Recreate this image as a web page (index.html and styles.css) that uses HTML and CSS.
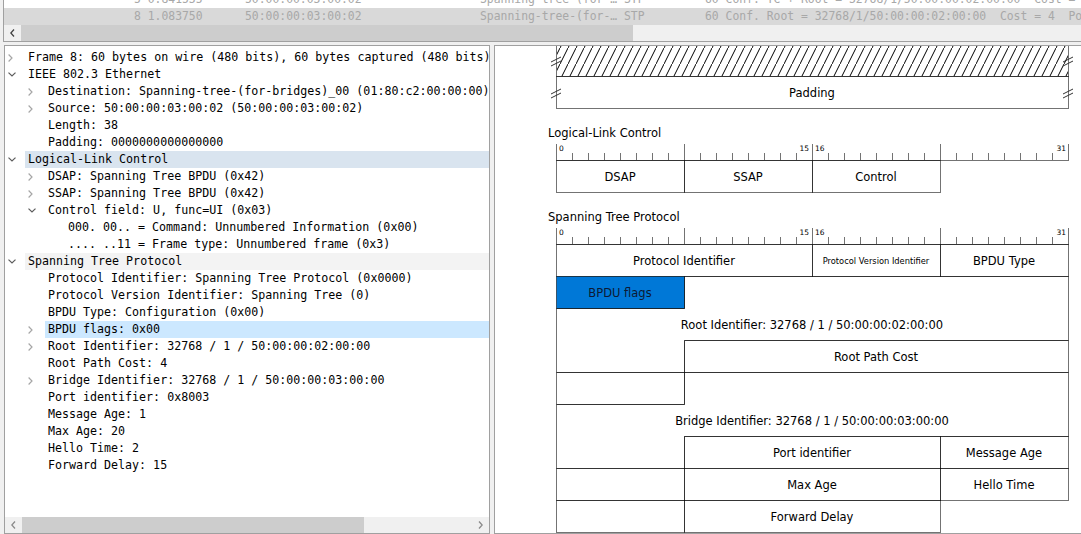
FILE: index.html
```html
<!DOCTYPE html>
<html>
<head>
<meta charset="utf-8">
<link rel="stylesheet" href="styles.css">
</head>
<body>
<div class="plist">
  <div class="plist-rows">
    <div class="prow first"><span class="pc c1">5 0.841535</span><span class="pc c2">50:00:00:03:00:02</span><span class="pc c3">Spanning-tree-(for-… STP</span><span class="pc c4">60 Conf. TC + Root = 32768/1/50:00:00:02:00:00  Cost = 4  Port = 0x8003</span></div>
    <div class="prow sel"><span class="pc c1">8 1.083750</span><span class="pc c2">50:00:00:03:00:02</span><span class="pc c3">Spanning-tree-(for-… STP</span><span class="pc c4">60 Conf. Root = 32768/1/50:00:00:02:00:00  Cost = 4  Port = 0x8003</span></div>
  </div>
  <div class="hscroll">
    <div class="sb-btn"><svg width="5" height="8" viewBox="0 0 5 8"><path d="M4 0.5 L0.8 4 L4 7.5" fill="none" stroke="#404040" stroke-width="1.3"/></svg></div>
    <div class="sb-thumb top-thumb"></div>
    <div class="sb-track"></div>
  </div>
</div>

<div class="panes">
  <div class="tree-pane">
    <div class="tree">
      <div class="trow"><span class="tw"><svg class="chev" width="5" height="8" viewBox="0 0 5 8"><path d="M0.6 0.5 L4 4 L0.6 7.5"/></svg></span><span class="lbl">Frame 8: 60 bytes on wire (480 bits), 60 bytes captured (480 bits)</span></div>
      <div class="trow"><span class="tw"><svg class="chev open" width="8" height="5" viewBox="0 0 8 5"><path d="M0.5 0.6 L4 4 L7.5 0.6"/></svg></span><span class="lbl">IEEE 802.3 Ethernet</span></div>
      <div class="trow l1"><span class="tw"><svg class="chev" width="5" height="8" viewBox="0 0 5 8"><path d="M0.6 0.5 L4 4 L0.6 7.5"/></svg></span><span class="lbl">Destination: Spanning-tree-(for-bridges)_00 (01:80:c2:00:00:00)</span></div>
      <div class="trow l1"><span class="tw"><svg class="chev" width="5" height="8" viewBox="0 0 5 8"><path d="M0.6 0.5 L4 4 L0.6 7.5"/></svg></span><span class="lbl">Source: 50:00:00:03:00:02 (50:00:00:03:00:02)</span></div>
      <div class="trow l1"><span class="tw"></span><span class="lbl">Length: 38</span></div>
      <div class="trow l1"><span class="tw"></span><span class="lbl">Padding: 0000000000000000</span></div>
      <div class="trow parent"><span class="tw"><svg class="chev open" width="8" height="5" viewBox="0 0 8 5"><path d="M0.5 0.6 L4 4 L7.5 0.6"/></svg></span><span class="lbl">Logical-Link Control</span></div>
      <div class="trow l1"><span class="tw"><svg class="chev" width="5" height="8" viewBox="0 0 5 8"><path d="M0.6 0.5 L4 4 L0.6 7.5"/></svg></span><span class="lbl">DSAP: Spanning Tree BPDU (0x42)</span></div>
      <div class="trow l1"><span class="tw"><svg class="chev" width="5" height="8" viewBox="0 0 5 8"><path d="M0.6 0.5 L4 4 L0.6 7.5"/></svg></span><span class="lbl">SSAP: Spanning Tree BPDU (0x42)</span></div>
      <div class="trow l1"><span class="tw"><svg class="chev open" width="8" height="5" viewBox="0 0 8 5"><path d="M0.5 0.6 L4 4 L7.5 0.6"/></svg></span><span class="lbl">Control field: U, func=UI (0x03)</span></div>
      <div class="trow l2"><span class="tw"></span><span class="lbl">000. 00.. = Command: Unnumbered Information (0x00)</span></div>
      <div class="trow l2"><span class="tw"></span><span class="lbl">.... ..11 = Frame type: Unnumbered frame (0x3)</span></div>
      <div class="trow hover"><span class="tw"><svg class="chev open" width="8" height="5" viewBox="0 0 8 5"><path d="M0.5 0.6 L4 4 L7.5 0.6"/></svg></span><span class="lbl">Spanning Tree Protocol</span></div>
      <div class="trow l1"><span class="tw"></span><span class="lbl">Protocol Identifier: Spanning Tree Protocol (0x0000)</span></div>
      <div class="trow l1"><span class="tw"></span><span class="lbl">Protocol Version Identifier: Spanning Tree (0)</span></div>
      <div class="trow l1"><span class="tw"></span><span class="lbl">BPDU Type: Configuration (0x00)</span></div>
      <div class="trow l1 sel"><span class="tw"><svg class="chev" width="5" height="8" viewBox="0 0 5 8"><path d="M0.6 0.5 L4 4 L0.6 7.5"/></svg></span><span class="lbl">BPDU flags: 0x00</span></div>
      <div class="trow l1"><span class="tw"><svg class="chev" width="5" height="8" viewBox="0 0 5 8"><path d="M0.6 0.5 L4 4 L0.6 7.5"/></svg></span><span class="lbl">Root Identifier: 32768 / 1 / 50:00:00:02:00:00</span></div>
      <div class="trow l1"><span class="tw"></span><span class="lbl">Root Path Cost: 4</span></div>
      <div class="trow l1"><span class="tw"><svg class="chev" width="5" height="8" viewBox="0 0 5 8"><path d="M0.6 0.5 L4 4 L0.6 7.5"/></svg></span><span class="lbl">Bridge Identifier: 32768 / 1 / 50:00:00:03:00:00</span></div>
      <div class="trow l1"><span class="tw"></span><span class="lbl">Port identifier: 0x8003</span></div>
      <div class="trow l1"><span class="tw"></span><span class="lbl">Message Age: 1</span></div>
      <div class="trow l1"><span class="tw"></span><span class="lbl">Max Age: 20</span></div>
      <div class="trow l1"><span class="tw"></span><span class="lbl">Hello Time: 2</span></div>
      <div class="trow l1"><span class="tw"></span><span class="lbl">Forward Delay: 15</span></div>
    </div>
    <div class="hscroll pane-scroll">
      <div class="sb-btn"><svg width="5" height="8" viewBox="0 0 5 8"><path d="M4 0.5 L0.8 4 L4 7.5" fill="none" stroke="#8a8a8a" stroke-width="1.3"/></svg></div>
      <div class="sb-thumb tree-thumb"></div>
      <div class="sb-track"></div>
      <div class="sb-btn"><svg width="5" height="8" viewBox="0 0 5 8"><path d="M1 0.5 L4.2 4 L1 7.5" fill="none" stroke="#8a8a8a" stroke-width="1.3"/></svg></div>
    </div>
  </div>

  <div class="diagram-pane">
    <svg class="diagram" width="586" height="487" viewBox="495 46 586 487">
      <defs>
        <pattern id="hatch" patternUnits="userSpaceOnUse" width="8" height="16">
          <path d="M-1 18 L9 -2" stroke="#000" stroke-width="1"/>
        </pattern>
        <g id="ruler">
          <path class="ln" d="M556 160.5 H1069"/>
          <path class="ln" d="M556.5 144 V160 M684.5 144 V160 M812.5 144 V160 M940.5 144 V160 M1068.5 144 V160"/>
          <path class="ln" d="M572.5 153V160 M588.5 153V160 M604.5 153V160 M620.5 153V160 M636.5 153V160 M652.5 153V160 M668.5 153V160 M700.5 153V160 M716.5 153V160 M732.5 153V160 M748.5 153V160 M764.5 153V160 M780.5 153V160 M796.5 153V160 M828.5 153V160 M844.5 153V160 M860.5 153V160 M876.5 153V160 M892.5 153V160 M908.5 153V160 M924.5 153V160 M956.5 153V160 M972.5 153V160 M988.5 153V160 M1004.5 153V160 M1020.5 153V160 M1036.5 153V160 M1052.5 153V160"/>
          <text class="bit" x="559" y="151">0</text>
          <text class="bit" x="809" y="151" text-anchor="end">15</text>
          <text class="bit" x="815" y="151">16</text>
          <text class="bit" x="1066" y="151" text-anchor="end">31</text>
        </g>
      </defs>

      <!-- Ethernet trailer -->
      <rect x="556.5" y="30" width="512" height="46.5" fill="#fff"/>
      <rect x="557" y="30" width="511" height="46" fill="url(#hatch)"/>
      <rect class="ln" x="556.5" y="30" width="512" height="46.5"/>
      <rect class="ln" x="556.5" y="76.5" width="512" height="32"/>
      <text class="t" x="812" y="97" text-anchor="middle">Padding</text>
      <path class="brk" d="M551 62 L561 57 M551 66 L561 61 M551 94 L561 89 M551 98 L561 93 M1063 62 L1073 57 M1063 66 L1073 61 M1063 94 L1073 89 M1063 98 L1073 93"/>

      <!-- Logical-Link Control -->
      <text class="t" x="548" y="137">Logical-Link Control</text>
      <use href="#ruler"/>
      <rect class="ln" x="556.5" y="160.5" width="128" height="32"/>
      <rect class="ln" x="684.5" y="160.5" width="128" height="32"/>
      <rect class="ln" x="812.5" y="160.5" width="128" height="32"/>
      <text class="t" x="620" y="181" text-anchor="middle">DSAP</text>
      <text class="t" x="748" y="181" text-anchor="middle">SSAP</text>
      <text class="t" x="876" y="181" text-anchor="middle">Control</text>

      <!-- Spanning Tree Protocol -->
      <text class="t" x="548" y="221">Spanning Tree Protocol</text>
      <use href="#ruler" y="84"/>
      <rect class="ln" x="556.5" y="244.5" width="256" height="32"/>
      <rect class="ln" x="812.5" y="244.5" width="128" height="32"/>
      <rect class="ln" x="940.5" y="244.5" width="128" height="32"/>
      <text class="t" x="684" y="265" text-anchor="middle">Protocol Identifier</text>
      <text class="t small" x="876" y="264" text-anchor="middle">Protocol Version Identifier</text>
      <text class="t" x="1004" y="265" text-anchor="middle">BPDU Type</text>

      <rect class="ln flag" x="556.5" y="276.5" width="128" height="32"/>
      <text class="t on-sel" x="620" y="297" text-anchor="middle">BPDU flags</text>

      <path class="ln" d="M684.5 276.5 H1068.5 V340.5 H684.5 V372.5 H556.5 V308.5 H684.5 Z"/>
      <text class="t" x="812" y="329" text-anchor="middle">Root Identifier: 32768 / 1 / 50:00:00:02:00:00</text>

      <path class="ln" d="M684.5 340.5 H1068.5 V372.5 H684.5 V404.5 H556.5 V372.5 H684.5 Z"/>
      <text class="t" x="876" y="361" text-anchor="middle">Root Path Cost</text>

      <path class="ln" d="M684.5 372.5 H1068.5 V436.5 H684.5 V468.5 H556.5 V404.5 H684.5 Z"/>
      <text class="t" x="812" y="425" text-anchor="middle">Bridge Identifier: 32768 / 1 / 50:00:00:03:00:00</text>

      <rect class="ln" x="684.5" y="436.5" width="256" height="32"/>
      <text class="t" x="812" y="457" text-anchor="middle">Port identifier</text>

      <rect class="ln" x="940.5" y="436.5" width="128" height="32"/>
      <rect class="ln" x="556.5" y="468.5" width="128" height="32"/>
      <text class="t" x="1004" y="457" text-anchor="middle">Message Age</text>

      <rect class="ln" x="684.5" y="468.5" width="256" height="32"/>
      <text class="t" x="812" y="489" text-anchor="middle">Max Age</text>

      <rect class="ln" x="940.5" y="468.5" width="128" height="32"/>
      <rect class="ln" x="556.5" y="500.5" width="128" height="32"/>
      <text class="t" x="1004" y="489" text-anchor="middle">Hello Time</text>

      <rect class="ln" x="684.5" y="500.5" width="256" height="32"/>
      <text class="t" x="812" y="521" text-anchor="middle">Forward Delay</text>
    </svg>
  </div>
</div>
</body>
</html>
```

FILE: styles.css
```css
* { box-sizing: border-box; }

html, body {
  margin: 0;
  padding: 0;
}

body {
  width: 1081px;
  height: 534px;
  overflow: hidden;
  background: #f0f0f0;
  font-family: "DejaVu Sans Mono", "Liberation Mono", monospace;
}

/* ---------- packet list (top) ---------- */
.plist {
  margin-left: 3px;
  height: 42px;
  border-left: 1px solid #a0a0a0;
  border-bottom: 1px solid #a0a0a0;
  display: flex;
  flex-direction: column;
}

.plist-rows {
  height: 25px;
  overflow: hidden;
  background: #fff;
  flex: none;
}

.prow {
  height: 17px;
  display: flex;
  padding-left: 130px;
  white-space: pre;
  font-size: 11.4px;
  line-height: 17px;
  color: #a8a8a8;
}

.prow.first { margin-top: -9px; }
.prow.sel { background: #d9d9d9; }

.pc { flex: none; overflow: hidden; }
.c1 { width: 111px; }
.c2 { width: 235px; }
.c3 { width: 225px; }
.c4 { width: 400px; }

.hscroll {
  height: 16px;
  flex: none;
  display: flex;
  background: #f0f0f0;
}

.sb-btn {
  width: 17px;
  flex: none;
  display: flex;
  align-items: center;
  justify-content: center;
}

.sb-btn svg { display: block; }

.sb-thumb {
  flex: none;
  background: #cdcdcd;
}

.top-thumb { width: 612px; }
.tree-thumb { width: 342px; }

.sb-track { flex: 1; }

/* ---------- panes ---------- */
.panes {
  display: flex;
  margin-top: 3px;
  height: 489px;
}

.tree-pane {
  margin-left: 4px;
  width: 486px;
  flex: none;
  border: 1px solid #a0a0a0;
  background: #fff;
  display: flex;
  flex-direction: column;
  overflow: hidden;
}

.tree {
  flex: 1;
  padding-top: 3px;
  overflow: hidden;
}

.trow {
  height: 17px;
  display: flex;
  align-items: center;
  font-size: 11.65px;
  line-height: 17px;
  white-space: pre;
  color: #000;
}

.trow.l1 { padding-left: 20px; }
.trow.l2 { padding-left: 40px; }

.tw {
  width: 20px;
  flex: none;
  display: flex;
  align-items: center;
  padding-left: 3px;
  height: 17px;
}

.chev { display: block; }
.chev path {
  fill: none;
  stroke: #a6a6a6;
  stroke-width: 1.2;
}
.chev.open path { stroke: #5c5c5c; }

.lbl {
  flex: 1;
  min-width: 0;
  padding-left: 3px;
  height: 17px;
  overflow: hidden;
}

.trow.parent .lbl { background: #d9e4ef; }
.trow.sel .lbl { background: #cce8ff; }
.trow.hover .lbl { background: #f3f3f3; }

.diagram-pane {
  margin-left: 4px;
  flex: 1;
  border: 1px solid #a0a0a0;
  border-right: none;
  background: #fff;
  overflow: hidden;
}

.diagram { display: block; }

.diagram .ln {
  fill: none;
  stroke: rgba(0, 0, 0, 0.55);
  stroke-width: 1;
}

.diagram .flag { fill: #0078d7; }

.diagram .brk {
  fill: none;
  stroke: #333;
  stroke-width: 1;
}

.diagram .t {
  font-family: "DejaVu Sans", sans-serif;
  font-size: 11.5px;
  fill: #000;
}

.diagram .t.small { font-size: 8.3px; }
.diagram .t.on-sel { fill: #0d1a33; }

.diagram .bit {
  font-family: "DejaVu Sans", sans-serif;
  font-size: 7.5px;
  fill: #000;
}
```
